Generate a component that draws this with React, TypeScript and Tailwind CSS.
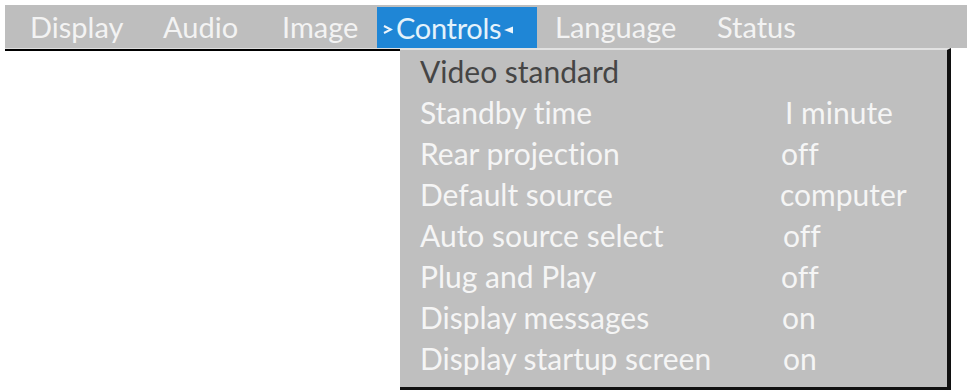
import React from "react";

const font = { fontFamily: "Lato, 'Open Sans', sans-serif" };

const rows: { label: string; value?: string; valueClass?: string; active?: boolean }[] = [
  { label: "Video standard", active: true },
  { label: "Standby time", value: "I minute", valueClass: "pl-[5px]" },
  { label: "Rear projection", value: "off", valueClass: "pl-[1px]" },
  { label: "Default source", value: "computer", valueClass: "pl-0" },
  { label: "Auto source select", value: "off", valueClass: "pl-[3px]" },
  { label: "Plug and Play", value: "off", valueClass: "pl-[1px]" },
  { label: "Display messages", value: "on", valueClass: "pl-[2px]" },
  { label: "Display startup screen", value: "on", valueClass: "pl-[3px]" },
];

function Chevron({ dir }: { dir: "right" | "left" }) {
  return dir === "right" ? (
    <svg width="11" height="11" viewBox="0 0 11 11" className="shrink-0 mt-[4px]">
      <path d="M2 2 L9 5.5 L2 9" fill="none" stroke="#eef6fc" strokeWidth="2" />
    </svg>
  ) : (
    <svg width="13" height="10" viewBox="0 0 13 10" className="shrink-0 mt-[4px]">
      <path d="M12 1.5 L3 5 L12 8.5 Z" fill="#eef6fc" />
    </svg>
  );
}

export default function App() {
  return (
    <div className="w-[967px] h-[390px] bg-white overflow-hidden [font-variant-ligatures:none]" style={font}>
      {/* top menu bar */}
      <div className="pt-[5px] pl-[5px]">
        <div className="h-[43px] bg-[#bebebe] flex items-stretch text-[29px] text-[#f3f3f3] leading-none">
          <div className="w-[153px] pl-[25px] flex items-center">Display</div>
          <div className="w-[119px] pl-[5px] flex items-center">Audio</div>
          <div className="w-[100px] pl-[5px] flex items-center">Image</div>
          <div className="w-[160px] mt-[2px] bg-[#1f86d6] flex items-center pl-[5px] text-[#e4f2fb]">
            <Chevron dir="right" />
            <span className="ml-[3px] tracking-[-0.3px]">Controls</span>
            <Chevron dir="left" />
          </div>
          <div className="w-[175px] pl-[18px] flex items-center">Language</div>
          <div className="flex-1 pl-[5px] flex items-center">Status</div>
        </div>
      </div>

      <div className="flex">
        <div className="w-[395px] ml-[5px]">
          <div className="h-[1px] bg-[#dedede]" />
          <div className="h-[2px] bg-black" />
        </div>
        <div className="w-[551px] h-[342px] bg-[#bfbfbf] border-t-2 border-t-[#e2e2e2] border-r-4 border-r-[#111] border-b-[3px] border-b-[#111] text-[30px] leading-none">
          {rows.map((r) => (
            <div key={r.label} className="h-[41px] flex items-center pl-[20px]">
              <span className={`w-[360px] ${r.active ? "text-[#454545]" : "text-[#f5f5f5]"}`}>
                {r.label}
              </span>
              {r.value && <span className={`text-[#f5f5f5] ${r.valueClass}`}>{r.value}</span>}
            </div>
          ))}
        </div>
      </div>
    </div>
  );
}
